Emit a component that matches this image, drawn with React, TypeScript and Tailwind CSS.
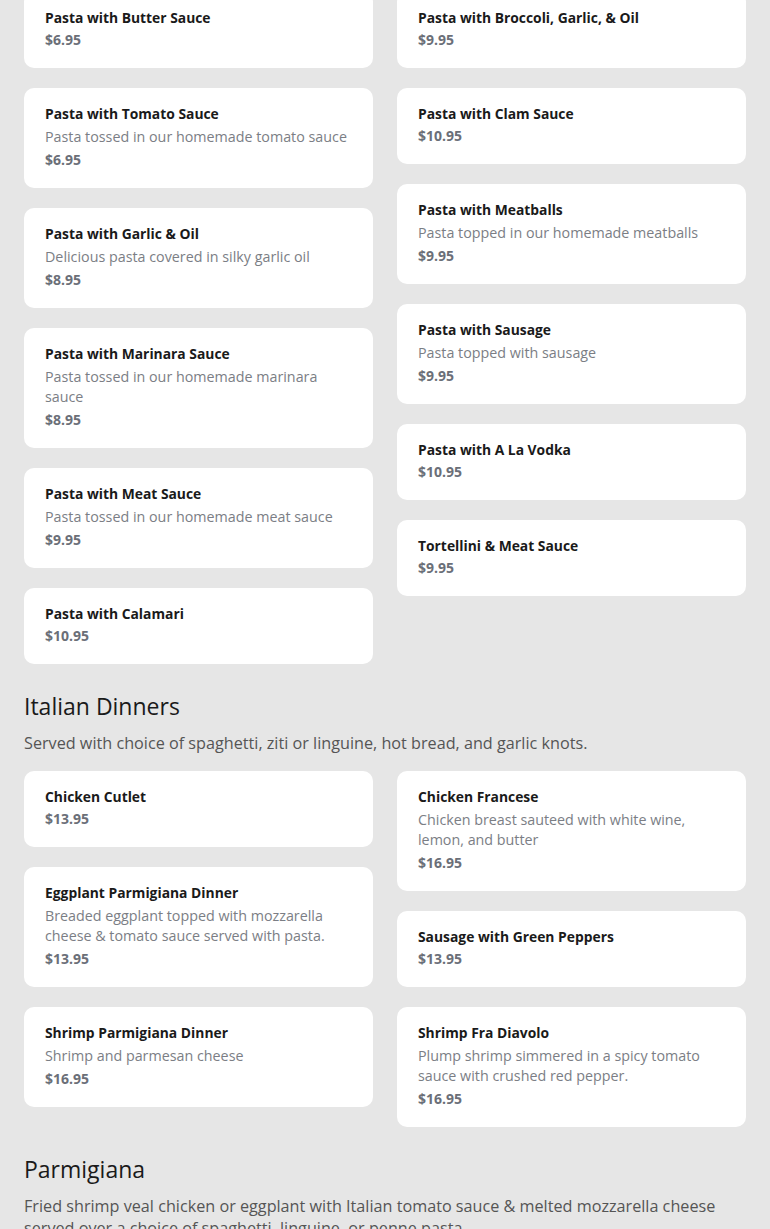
type Item = { name: string; desc?: string; price: string };

const pastaLeft: Item[] = [
  { name: "Pasta with Butter Sauce", price: "$6.95" },
  { name: "Pasta with Tomato Sauce", desc: "Pasta tossed in our homemade tomato sauce", price: "$6.95" },
  { name: "Pasta with Garlic & Oil", desc: "Delicious pasta covered in silky garlic oil", price: "$8.95" },
  { name: "Pasta with Marinara Sauce", desc: "Pasta tossed in our homemade marinara sauce", price: "$8.95" },
  { name: "Pasta with Meat Sauce", desc: "Pasta tossed in our homemade meat sauce", price: "$9.95" },
  { name: "Pasta with Calamari", price: "$10.95" },
];

const pastaRight: Item[] = [
  { name: "Pasta with Broccoli, Garlic, & Oil", price: "$9.95" },
  { name: "Pasta with Clam Sauce", price: "$10.95" },
  { name: "Pasta with Meatballs", desc: "Pasta topped in our homemade meatballs", price: "$9.95" },
  { name: "Pasta with Sausage", desc: "Pasta topped with sausage", price: "$9.95" },
  { name: "Pasta with A La Vodka", price: "$10.95" },
  { name: "Tortellini & Meat Sauce", price: "$9.95" },
];

const dinnersLeft: Item[] = [
  { name: "Chicken Cutlet", price: "$13.95" },
  {
    name: "Eggplant Parmigiana Dinner",
    desc: "Breaded eggplant topped with mozzarella cheese & tomato sauce served with pasta.",
    price: "$13.95",
  },
  { name: "Shrimp Parmigiana Dinner", desc: "Shrimp and parmesan cheese", price: "$16.95" },
];

const dinnersRight: Item[] = [
  { name: "Chicken Francese", desc: "Chicken breast sauteed with white wine, lemon, and butter", price: "$16.95" },
  { name: "Sausage with Green Peppers", price: "$13.95" },
  {
    name: "Shrimp Fra Diavolo",
    desc: "Plump shrimp simmered in a spicy tomato sauce with crushed red pepper.",
    price: "$16.95",
  },
];

const Card = ({ item }: { item: Item }) => (
  <div className="bg-white rounded-[10px] px-[21px] pt-[15px] pb-[17px]">
    <h3 className="text-[13.85px] leading-[22px] font-bold text-[#1a1a1a]">{item.name}</h3>
    {item.desc && (
      <p className="text-[14.3px] leading-[20px] text-[#7b7e85] my-[2px]">{item.desc}</p>
    )}
    <p className="text-[14px] leading-[22px] font-bold text-[#6b6f78]">{item.price}</p>
  </div>
);

const Columns = ({ left, right }: { left: Item[]; right: Item[] }) => (
  <div className="grid grid-cols-2 gap-6 items-start">
    <div className="flex flex-col gap-5">
      {left.map((it) => (
        <Card key={it.name} item={it} />
      ))}
    </div>
    <div className="flex flex-col gap-5">
      {right.map((it) => (
        <Card key={it.name} item={it} />
      ))}
    </div>
  </div>
);

const SectionHead = ({ title, sub }: { title: string; sub: string }) => (
  <div className="mt-[26px] mb-[17px]">
    <h2 className="text-[23px] leading-[32px] text-[#1a1a1a]">{title}</h2>
    <p className="mt-[10px] text-[16.2px] leading-[22px] text-[#555555]">{sub}</p>
  </div>
);

export default function App() {
  return (
    <div
      className="min-h-screen bg-[#e6e6e6] px-6 overflow-hidden"
      style={{ fontFamily: '"Open Sans", "Noto Sans", sans-serif' }}
    >
      <div className="-mt-2">
        <Columns left={pastaLeft} right={pastaRight} />
        <SectionHead
          title="Italian Dinners"
          sub="Served with choice of spaghetti, ziti or linguine, hot bread, and garlic knots."
        />
        <Columns left={dinnersLeft} right={dinnersRight} />
        <SectionHead
          title="Parmigiana"
          sub="Fried shrimp veal chicken or eggplant with Italian tomato sauce & melted mozzarella cheese served over a choice of spaghetti, linguine, or penne pasta."
        />
      </div>
    </div>
  );
}
